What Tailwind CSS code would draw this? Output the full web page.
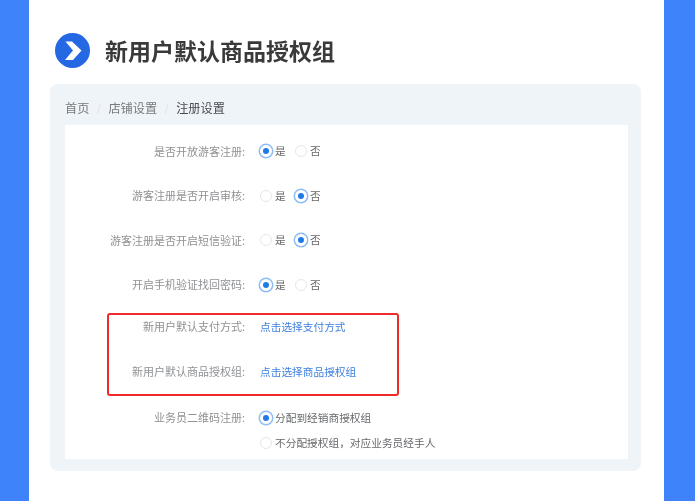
<!DOCTYPE html>
<html lang="zh">
<head>
<meta charset="utf-8">
<script src="https://cdn.jsdelivr.net/npm/@tailwindcss/browser@4"></script>
</head>
<body class="m-0 h-[501px] w-[695px] overflow-hidden bg-[#3f83fb] font-['Noto_Sans_CJK_SC','Noto_Sans',sans-serif]">
<main class="ml-[29px] h-[501px] w-[635px] bg-white pl-[21px] pr-[23px] pt-[33px] blur-[0.5px]">
  <header class="ml-[5px] flex h-[35px] items-center">
    <svg class="h-[35px] w-[35px] shrink-0" viewBox="0 0 35 35">
      <circle cx="17.5" cy="17.5" r="17.5" fill="#2468e4"/>
      <path d="M10.5 8.5h6.5l9.5 9-8.5 9.5h-8l8-9.5z" fill="#fff"/>
    </svg>
    <h1 class="ml-[15px] text-[23px] leading-[35px] font-bold text-[#3a3a3a]">新用户默认商品授权组</h1>
  </header>
  <section class="mt-[16px] h-[387px] w-[591px] rounded-[8px] bg-[#eef4f8] pl-[15px] pr-[13px] pt-[15px]">
    <nav class="flex h-[18px] items-center text-[12.2px] leading-[18px] text-[#77797c]">
      <span>首页</span>
      <span class="w-[19px] text-center text-[10px] text-[#d8dde2]">/</span>
      <span>店铺设置</span>
      <span class="w-[19px] text-center text-[10px] text-[#d8dde2]">/</span>
      <span class="text-[#4a4c50]">注册设置</span>
    </nav>
    <form class="mt-[8px] h-[334px] w-[563px] rounded-[2px] bg-white pt-[15px] text-[10.7px] leading-[22px] text-[#8f9194]">
      <div class="flex h-[22px] items-center">
        <span class="w-[180px] pb-[1px] text-right text-[11px]">是否开放游客注册:</span>
        <span class="ml-[15px] h-[12px] w-[12px] rounded-full border-[3px] border-white bg-[#1f7ae8] ring-[1.5px] ring-[#8dbdf5]"></span>
        <span class="ml-[3px] w-[15px] text-[#66686b]">是</span>
        <span class="ml-[5px] h-[12px] w-[12px] rounded-full border border-[#e4e6e8]"></span>
        <span class="ml-[3px] text-[#66686b]">否</span>
      </div>
      <div class="mt-[22.5px] flex h-[22px] items-center">
        <span class="w-[180px] pb-[1px] text-right text-[11px]">游客注册是否开启审核:</span>
        <span class="ml-[15px] h-[12px] w-[12px] rounded-full border border-[#e4e6e8]"></span>
        <span class="ml-[3px] w-[15px] text-[#66686b]">是</span>
        <span class="ml-[5px] h-[12px] w-[12px] rounded-full border-[3px] border-white bg-[#1f7ae8] ring-[1.5px] ring-[#8dbdf5]"></span>
        <span class="ml-[3px] text-[#66686b]">否</span>
      </div>
      <div class="mt-[22.5px] flex h-[22px] items-center">
        <span class="w-[180px] pb-[1px] text-right text-[11px]">游客注册是否开启短信验证:</span>
        <span class="ml-[15px] h-[12px] w-[12px] rounded-full border border-[#e4e6e8]"></span>
        <span class="ml-[3px] w-[15px] text-[#66686b]">是</span>
        <span class="ml-[5px] h-[12px] w-[12px] rounded-full border-[3px] border-white bg-[#1f7ae8] ring-[1.5px] ring-[#8dbdf5]"></span>
        <span class="ml-[3px] text-[#66686b]">否</span>
      </div>
      <div class="mt-[22.5px] flex h-[22px] items-center">
        <span class="w-[180px] pb-[1px] text-right text-[11px]">开启手机验证找回密码:</span>
        <span class="ml-[15px] h-[12px] w-[12px] rounded-full border-[3px] border-white bg-[#1f7ae8] ring-[1.5px] ring-[#8dbdf5]"></span>
        <span class="ml-[3px] w-[15px] text-[#66686b]">是</span>
        <span class="ml-[5px] h-[12px] w-[12px] rounded-full border border-[#e4e6e8]"></span>
        <span class="ml-[3px] text-[#66686b]">否</span>
      </div>
      <div class="relative mt-[20px] flex h-[22px] items-center">
        <span class="w-[180px] pb-[1px] text-right text-[11px]">新用户默认支付方式:</span>
        <span class="ml-[15px] text-[#3d7fe0]">点击选择支付方式</span>
        <div class="absolute left-[42px] top-[-3px] h-[83px] w-[292px] rounded-[3px] border-[2px] border-[#ee2a2a]"></div>
      </div>
      <div class="mt-[23px] flex h-[22px] items-center">
        <span class="w-[180px] pb-[1px] text-right text-[11px]">新用户默认商品授权组:</span>
        <span class="ml-[15px] text-[#3d7fe0]">点击选择商品授权组</span>
      </div>
      <div class="mt-[24px] flex h-[22px] items-center">
        <span class="w-[180px] pb-[1px] text-right text-[11px]">业务员二维码注册:</span>
        <span class="ml-[15px] h-[12px] w-[12px] rounded-full border-[3px] border-white bg-[#1f7ae8] ring-[1.5px] ring-[#8dbdf5]"></span>
        <span class="ml-[3px] text-[#66686b]">分配到经销商授权组</span>
      </div>
      <div class="mt-[3px] flex h-[22px] items-center pl-[195px]">
        <span class="h-[12px] w-[12px] rounded-full border border-[#e4e6e8]"></span>
        <span class="ml-[3px] text-[#66686b]">不分配授权组，对应业务员经手人</span>
      </div>
    </form>
  </section>
</main>
</body>
</html>
